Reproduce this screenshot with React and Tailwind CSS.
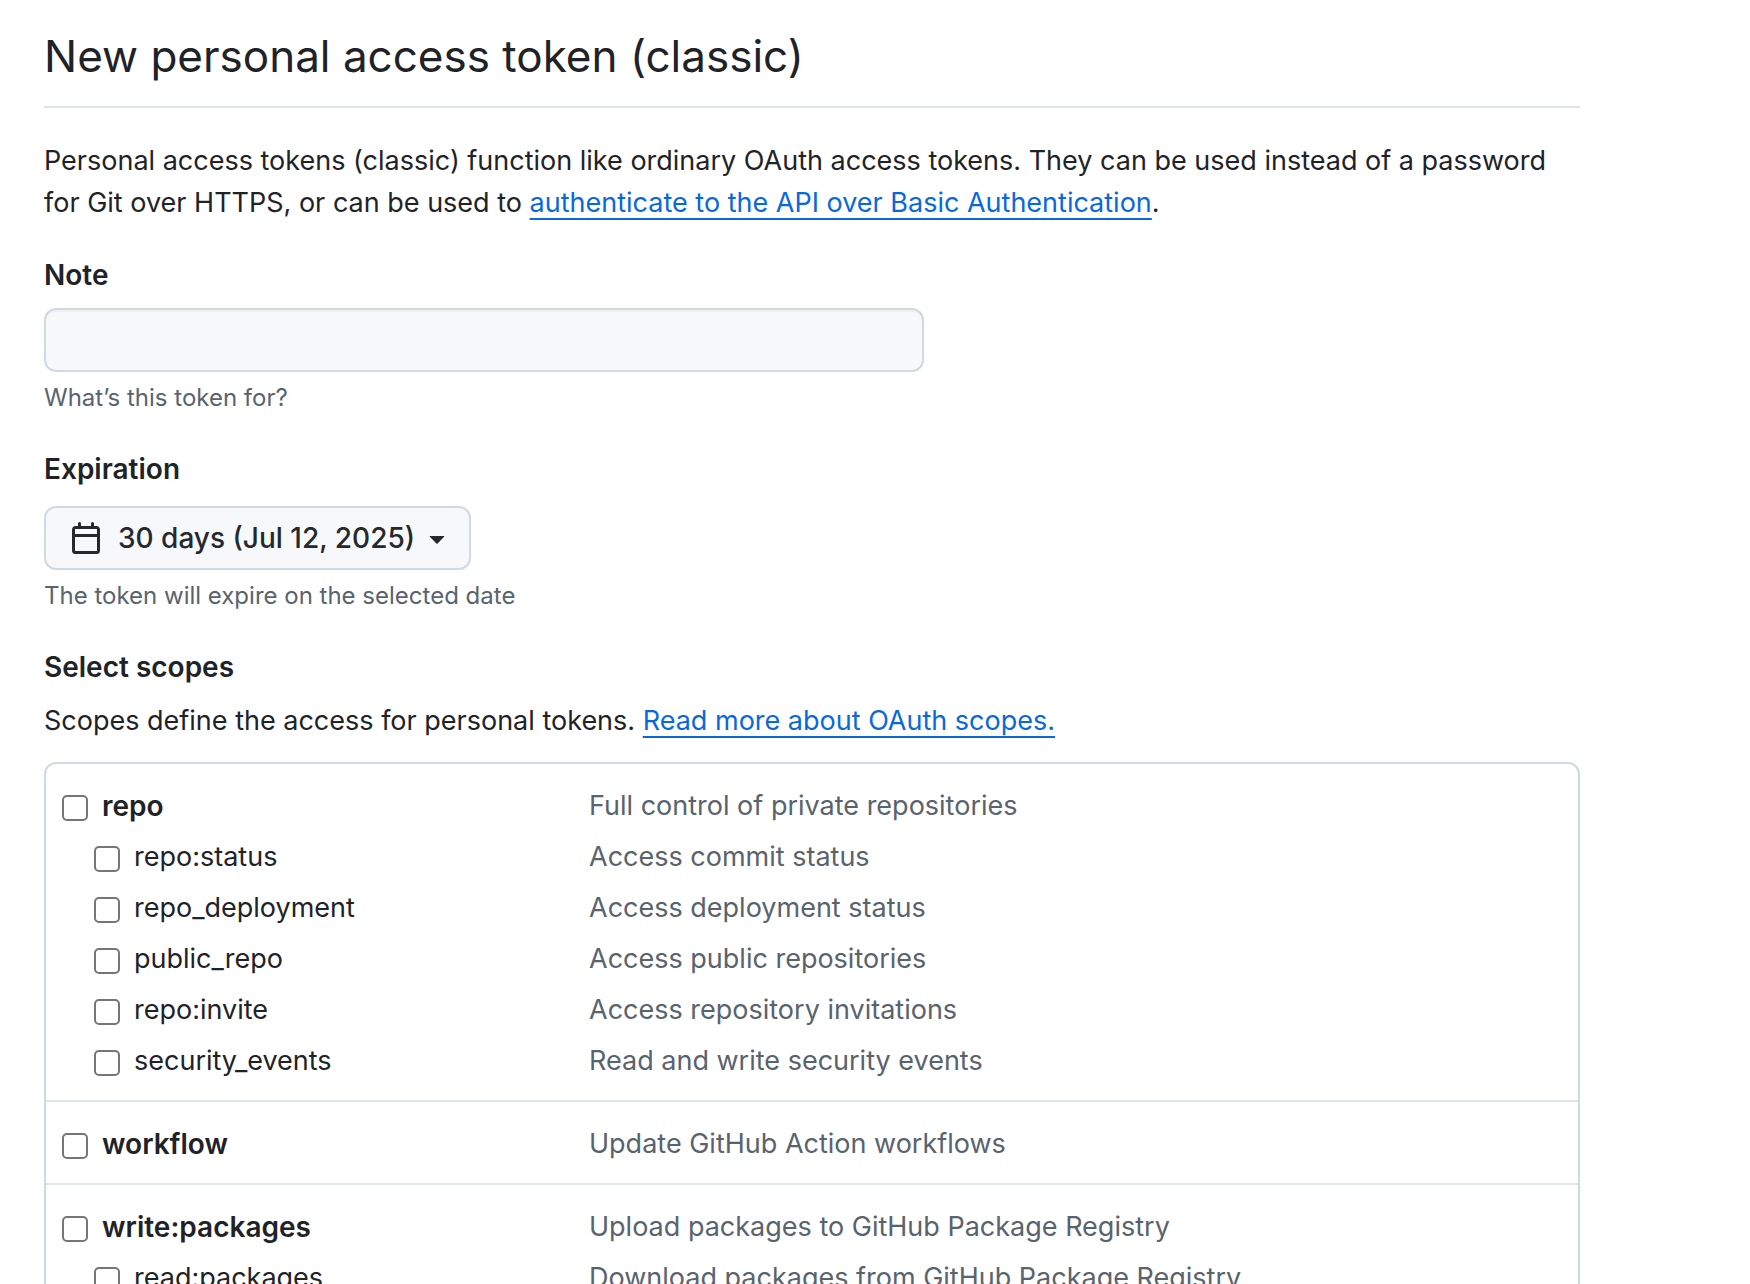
import { useState } from 'react';

const groups = [
    {
        name: 'repo',
        description: 'Full control of private repositories',
        children: [
            { name: 'repo:status', description: 'Access commit status' },
            { name: 'repo_deployment', description: 'Access deployment status' },
            { name: 'public_repo', description: 'Access public repositories' },
            { name: 'repo:invite', description: 'Access repository invitations' },
            { name: 'security_events', description: 'Read and write security events' },
        ],
    },
    {
        name: 'workflow',
        description: 'Update GitHub Action workflows',
        children: [],
    },
    {
        name: 'write:packages',
        description: 'Upload packages to GitHub Package Registry',
        children: [
            { name: 'read:packages', description: 'Download packages from GitHub Package Registry' },
        ],
    },
];

const CalendarIcon = () => (
    <svg viewBox="0 0 16 16" className="h-8 w-8 shrink-0" fill="currentColor" aria-hidden="true">
        <path d="M4.75 0a.75.75 0 0 1 .75.75V2h5V.75a.75.75 0 0 1 1.5 0V2h1.25c.966 0 1.75.784 1.75 1.75v10.5A1.75 1.75 0 0 1 13.25 16H2.75A1.75 1.75 0 0 1 1 14.25V3.75C1 2.784 1.784 2 2.75 2H4V.75A.75.75 0 0 1 4.75 0ZM2.5 7.5v6.75c0 .138.112.25.25.25h10.5a.25.25 0 0 0 .25-.25V7.5Zm10.75-4H2.75a.25.25 0 0 0-.25.25V6h11V3.75a.25.25 0 0 0-.25-.25Z" />
    </svg>
);

const CaretIcon = () => (
    <svg viewBox="0 0 16 16" className="h-8 w-8 shrink-0" fill="currentColor" aria-hidden="true">
        <path d="m4.427 7.427 3.396 3.396a.25.25 0 0 0 .354 0l3.396-3.396A.25.25 0 0 0 11.396 7H4.604a.25.25 0 0 0-.177.427Z" />
    </svg>
);

const TextLink = ({ href, children }) => (
    <a href={href} className="text-[#0969da] underline decoration-2 underline-offset-[6px]">
        {children}
    </a>
);

const ScopeRow = ({ scope, parent, checked, onToggle }) => (
    <li className="grid h-[51px] grid-cols-[527px_1fr] items-center">
        <label className={`flex items-center gap-[14px] ${parent ? 'text-[28px] font-semibold' : 'pl-8'}`}>
            <input
                type="checkbox"
                checked={checked}
                onChange={() => onToggle(scope.name)}
                className="mt-1 h-[26px] w-[26px] shrink-0 appearance-none rounded-[5px] border-2 border-[#767676] bg-white checked:border-[#0969da] checked:bg-[#0969da]"
            />
            {scope.name}
        </label>
        <span className="text-[#59636e]">{scope.description}</span>
    </li>
);

const App = () => {
    const [note, setNote] = useState('');
    const [selected, setSelected] = useState([]);

    const toggle = (name) => {
        setSelected((prev) => (prev.includes(name) ? prev.filter((n) => n !== name) : [...prev, name]));
    };

    return (
        <main className="h-screen overflow-hidden bg-white pt-5 pr-[170px] pl-11 font-['Inter',sans-serif] text-[27px] leading-[42px] text-[#1f2328]">
            <h1 className="border-b-2 border-[#d1d9e0]/70 pb-[14px] text-[44px] leading-[72px]">
                New personal access token (classic)
            </h1>

            <p className="mt-8">
                Personal access tokens (classic) function like ordinary OAuth access tokens. They can be used instead of a
                password for Git over HTTPS, or can be used to{' '}
                <TextLink href="#basic-auth">authenticate to the API over Basic Authentication</TextLink>.
            </p>

            <div className="mt-[30px] flex flex-col items-start">
                <label htmlFor="note" className="text-[28px] font-semibold">Note</label>
                <input
                    id="note"
                    type="text"
                    value={note}
                    onChange={(e) => setNote(e.target.value)}
                    className="mt-3 h-16 w-[880px] max-w-full rounded-xl border-2 border-[#d1d9e0] bg-[#f6f8fa] px-6 shadow-[inset_0_2px_0_#1f23280a]"
                />
                <p className="mt-2 text-[24px] leading-9 text-[#59636e]">What’s this token for?</p>
            </div>

            <div className="mt-8 flex flex-col items-start">
                <h2 id="expiration" className="text-[28px] font-semibold">Expiration</h2>
                <button
                    type="button"
                    aria-haspopup="menu"
                    className="mt-4 flex h-16 items-center rounded-xl border-2 border-[#d1d9e0] bg-[#f6f8fa] pr-4 pl-6 text-[28px] font-medium text-[#25292e]"
                >
                    <CalendarIcon />
                    <span className="mr-1.5 ml-4">30 days (Jul 12, 2025)</span>
                    <CaretIcon />
                </button>
                <p className="mt-2 text-[24px] leading-9 text-[#59636e]">The token will expire on the selected date</p>
            </div>

            <section className="mt-8">
                <h2 className="text-[28px] font-semibold">Select scopes</h2>
                <p className="mt-3">
                    Scopes define the access for personal tokens.{' '}
                    <TextLink href="#scopes">Read more about OAuth scopes.</TextLink>
                </p>
                <div className="mt-5 rounded-xl border-2 border-[#d1d9e0]">
                    {groups.map((group) => (
                        <ul key={group.name} className="border-b-2 border-[#d1d9e0]/70 px-4 pt-4 pb-[14px] last:border-b-0">
                            <ScopeRow scope={group} parent checked={selected.includes(group.name)} onToggle={toggle} />
                            {group.children.map((scope) => (
                                <ScopeRow
                                    key={scope.name}
                                    scope={scope}
                                    checked={selected.includes(scope.name) || selected.includes(group.name)}
                                    onToggle={toggle}
                                />
                            ))}
                        </ul>
                    ))}
                </div>
            </section>
        </main>
    );
};

export default App;
